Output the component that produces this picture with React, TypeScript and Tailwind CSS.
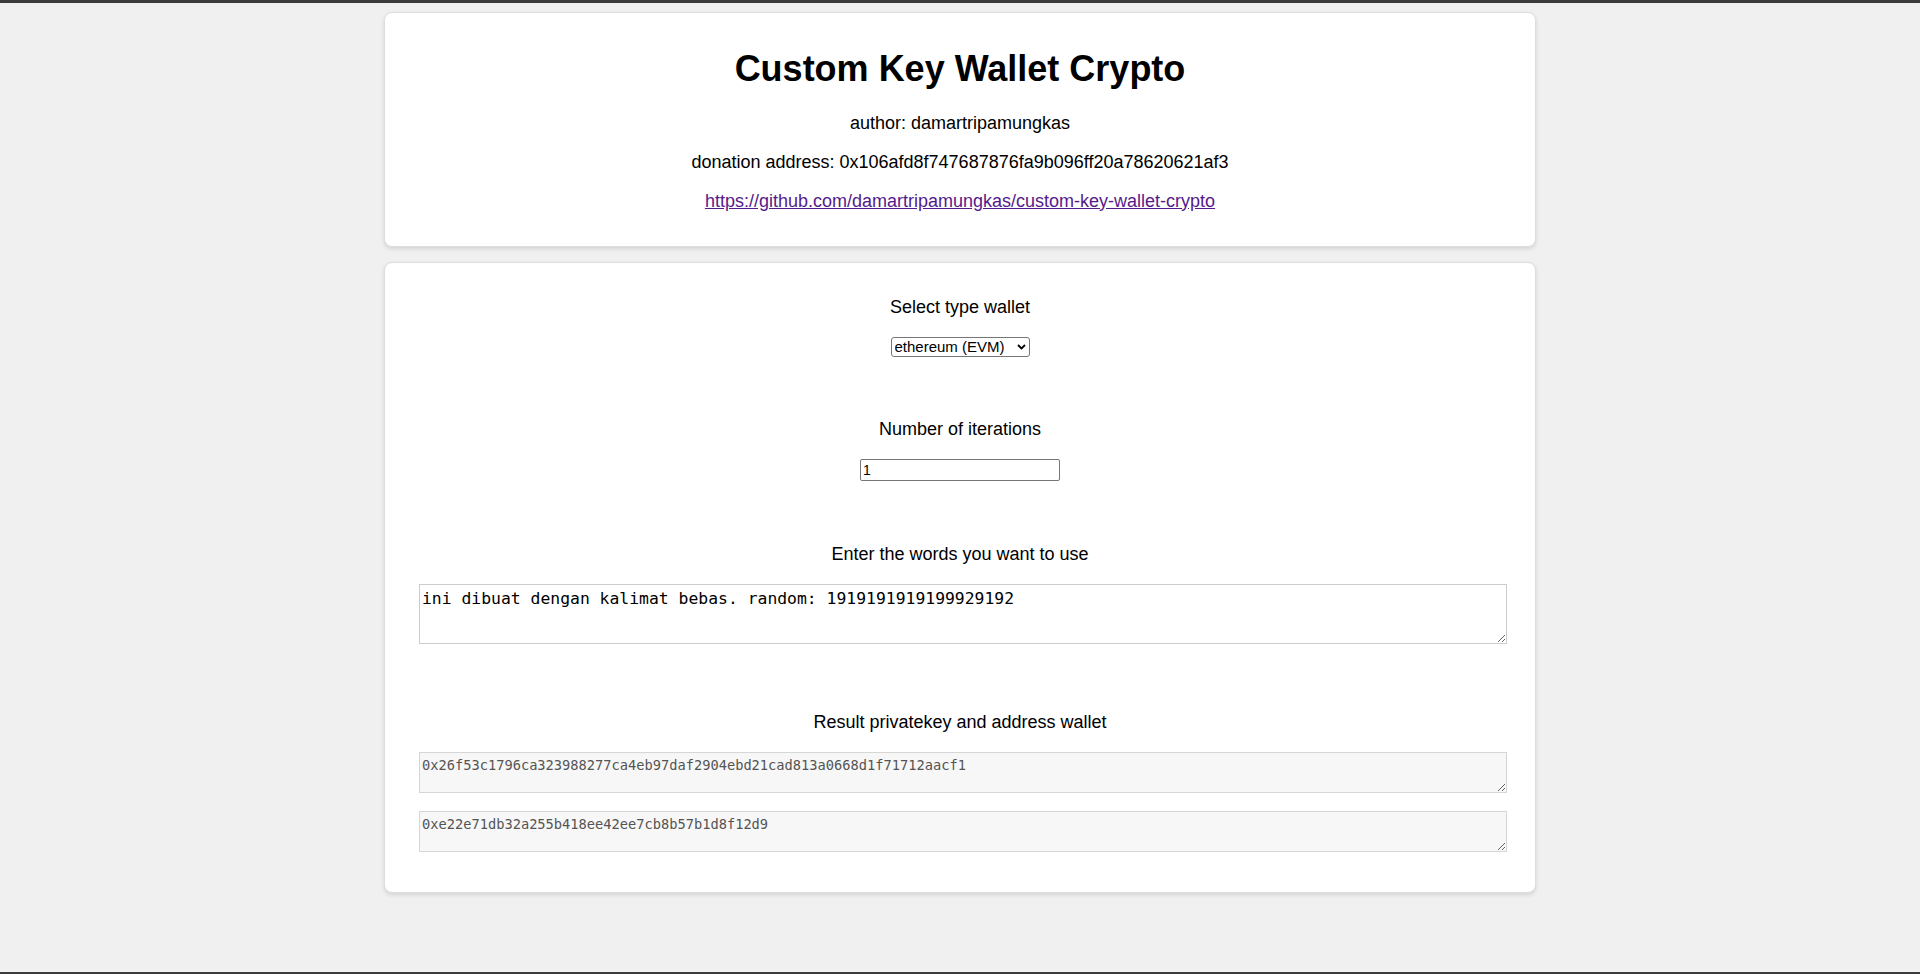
import React, { useState } from 'react';

const privateKey = '0x26f53c1796ca323988277ca4eb97daf2904ebd21cad813a0668d1f71712aacf1';
const address = '0xe22e71db32a255b418ee42ee7cb8b57b1d8f12d9';

export default function App() {
  const [wallet, setWallet] = useState('evm');
  const [iterations, setIterations] = useState('1');
  const [words, setWords] = useState('ini dibuat dengan kalimat bebas. random: 1919191919199929192');

  return (
    <div className="min-h-screen bg-[#f0f0f0] border-t-[3px] border-b-2 border-[#3b3b3b] font-['Liberation_Sans',Arial,sans-serif] text-[18px] leading-[1.15] text-black">
      {/* header card */}
      <div className="w-[60%] mx-auto mt-[9px] bg-white border border-[#dedede] rounded-[8px] shadow-[0_2px_4px_rgba(0,0,0,0.12)] px-4 pt-[35px] pb-[35px] text-center">
        <h1 className="text-[36px] font-bold leading-[1.15]">Custom Key Wallet Crypto</h1>
        <p className="mt-[24px]">author: damartripamungkas</p>
        <p className="mt-[18px]">donation address: 0x106afd8f747687876fa9b096ff20a78620621af3</p>
        <p className="mt-[18px]">
          <a href="#" className="text-[#551a8b] underline">
            https://github.com/damartripamungkas/custom-key-wallet-crypto
          </a>
        </p>
      </div>

      {/* generator card */}
      <div className="w-[60%] mx-auto mt-[15px] bg-white border border-[#dedede] rounded-[8px] shadow-[0_2px_4px_rgba(0,0,0,0.12)] px-4 pt-[34px] pb-[40px] text-center">
        <p>Select type wallet</p>
        <div className="relative mx-auto mt-[19px] w-[139px] h-[20px]">
          <select
            value={wallet}
            onChange={(e) => setWallet(e.target.value)}
            className="block appearance-none h-[20px] w-[139px] border border-[#767676] rounded-[3px] bg-white pl-[3px] pr-[16px] text-[15px] leading-[18px] font-['Liberation_Sans',Arial,sans-serif]"
          >
            <option value="evm">ethereum (EVM)</option>
            <option value="btc">bitcoin</option>
          </select>
          <svg className="absolute right-[4px] top-[7px] w-[9px] h-[6px] pointer-events-none" viewBox="0 0 9 6" fill="none">
            <path d="M1 1l3.5 3.5L8 1" stroke="#000" strokeWidth="1.8" />
          </svg>
        </div>

        <p className="mt-[62px]">Number of iterations</p>
        <input
          type="text"
          value={iterations}
          onChange={(e) => setIterations(e.target.value)}
          className="block mx-auto mt-[19px] h-[22px] w-[200px] border border-[#767676] rounded-[2px] px-[2px] text-[14px] leading-[normal] text-left"
        />

        <p className="mt-[63px]">Enter the words you want to use</p>
        <div className="mx-[18px] mt-[19px] text-left">
          <textarea
            value={words}
            onChange={(e) => setWords(e.target.value)}
            className="block w-[calc(100%+6px)] h-[60px] border border-[#cccccc] px-[2px] py-[2px] bg-white text-black font-['DejaVu_Sans_Mono',monospace] text-[16.4px] leading-[1.5]"
          />
        </div>

        <p className="mt-[68px]">Result privatekey and address wallet</p>
        <div className="mx-[18px] mt-[20px] text-left">
          <textarea
            readOnly
            value={privateKey}
            className="block w-[calc(100%+6px)] h-[41px] border border-[#d6d6d6] px-[2px] py-[2px] bg-[#f7f7f7] text-[#545454] font-['DejaVu_Sans_Mono',monospace] text-[13.7px] leading-[1.5]"
          />
          <textarea
            readOnly
            value={address}
            className="block mt-[18px] w-[calc(100%+6px)] h-[41px] border border-[#d6d6d6] px-[2px] py-[2px] bg-[#f7f7f7] text-[#545454] font-['DejaVu_Sans_Mono',monospace] text-[13.7px] leading-[1.5]"
          />
        </div>
      </div>
    </div>
  );
}
